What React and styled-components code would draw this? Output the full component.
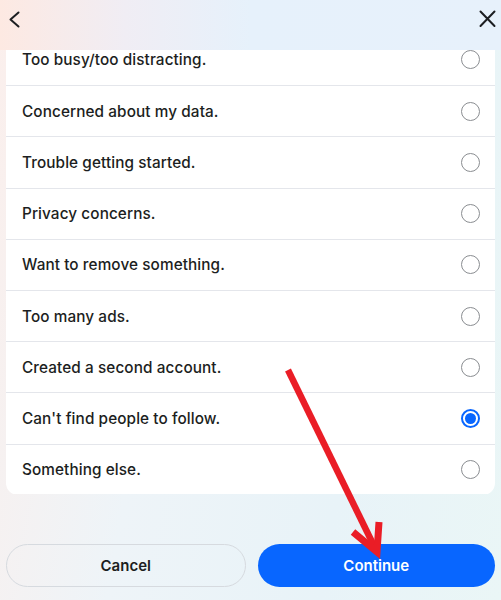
import React from "react"
import styled, { createGlobalStyle } from "styled-components"

const GlobalStyle = createGlobalStyle`
    html, body {
        margin: 0;
        padding: 0;
    }
    body {
        font-family: Inter, "Noto Sans", sans-serif;
        color: #1c1e21;
    }
`

const Page = styled.div`
    position: relative;
    width: 501px;
    height: 600px;
    overflow: hidden;
    display: flex;
    flex-direction: column;
    background: linear-gradient(100deg, #fbefec 0%, #eef4f8 35%, #e8f3f8 70%, #eaf6f6 100%);
`

const Header = styled.div`
    height: 50px;
    flex-shrink: 0;
    display: flex;
    align-items: flex-start;
    justify-content: space-between;
    padding: 7px 2px 0 4px;
    background: linear-gradient(90deg, #fde9e2 0%, #f0edf4 25%, #e6f1fb 50%, #e7f1fb 100%);
    position: relative;
    z-index: 2;
    box-sizing: border-box;
`

const IconButton = styled.button`
    border: none;
    background: none;
    padding: 0;
    width: 24px;
    height: 24px;
    display: flex;
    color: #1c1e21;
`

const Viewport = styled.div`
    height: 444px;
    overflow: hidden;
    padding: 0 6px;
`

const Card = styled.div`
    margin-top: -16px;
    background: #fff;
    border-radius: 0 0 12px 12px;
    overflow: hidden;
`

const Row = styled.label`
    height: 51.2px;
    display: flex;
    align-items: center;
    justify-content: space-between;
    padding: 0 15px 0 16px;
    border-top: ${p => (p.first ? "none" : "1px solid #e4e6eb")};
    box-sizing: border-box;
    font-size: 15.3px;
    font-weight: 500;
    letter-spacing: 0.1px;
    color: #1c1e21;
`

const Radio = styled.span`
    width: 19px;
    height: 19px;
    border-radius: 50%;
    box-sizing: border-box;
    border: ${p => (p.checked ? "2px solid #0866ff" : "1.6px solid #8a8d91")};
    display: flex;
    align-items: center;
    justify-content: center;

    &::after {
        content: "";
        display: ${p => (p.checked ? "block" : "none")};
        width: 11px;
        height: 11px;
        border-radius: 50%;
        background: #0866ff;
    }
`

const Footer = styled.div`
    flex: 1;
    display: flex;
    align-items: flex-end;
    gap: 12px;
    padding: 0 6px 13px;
`

const Button = styled.button`
    flex: 1;
    height: 43px;
    border-radius: 22px;
    font-family: Inter, "Noto Sans", sans-serif;
    font-size: 15px;
    font-weight: 600;
    cursor: pointer;
    border: ${p => (p.primary ? "none" : "1px solid #d6dadf")};
    background: ${p => (p.primary ? "#0866ff" : "transparent")};
    color: ${p => (p.primary ? "#fff" : "#1c1e21")};
`

const Annotation = styled.svg`
    position: absolute;
    left: 0;
    top: 0;
    pointer-events: none;
    z-index: 3;
`

const reasons = [
    "Too busy/too distracting.",
    "Concerned about my data.",
    "Trouble getting started.",
    "Privacy concerns.",
    "Want to remove something.",
    "Too many ads.",
    "Created a second account.",
    "Can't find people to follow.",
    "Something else.",
]

export default function App() {
    const selected = 7
    return (
        <>
            <GlobalStyle />
            <Page>
                <Header>
                    <IconButton>
                        <svg width="24" height="24" viewBox="0 0 24 24" fill="none" stroke="#1c1e21" strokeWidth="2" strokeLinecap="round" strokeLinejoin="round">
                            <path d="M14.5 5.5 6.5 12.5l8 7" />
                        </svg>
                    </IconButton>
                    <IconButton>
                        <svg width="24" height="24" viewBox="0 0 24 24" fill="none" stroke="#1c1e21" strokeWidth="2" strokeLinecap="round">
                            <path d="M5.5 4.5l14 14.5M19.5 4.5 5.5 19" />
                        </svg>
                    </IconButton>
                </Header>
                <Viewport>
                    <Card>
                        {reasons.map((r, i) => (
                            <Row key={r} first={i === 0}>
                                {r}
                                <Radio checked={i === selected} />
                            </Row>
                        ))}
                    </Card>
                </Viewport>
                <Footer>
                    <Button>Cancel</Button>
                    <Button primary>Continue</Button>
                </Footer>
                <Annotation width="501" height="600" viewBox="0 0 501 600">
                    <g stroke="#ea1d26" fill="none">
                        <path d="M288 370 L374 546" strokeWidth="6.5" />
                        <path d="M353 532 L377 552 L379 522" strokeWidth="7" strokeLinejoin="miter" />
                    </g>
                </Annotation>
            </Page>
        </>
    )
}
